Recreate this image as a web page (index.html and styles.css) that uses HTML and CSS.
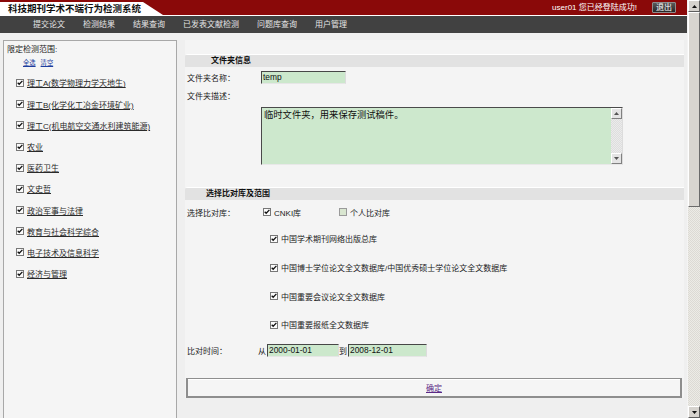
FILE: index.html
```html
<!DOCTYPE html>
<html lang="zh-CN">
<head>
<meta charset="utf-8">
<title>科技期刊学术不端行为检测系统</title>
<link rel="stylesheet" href="styles.css">
</head>
<body>
<div class="screen">
  <div class="page">
    <header class="topbar">
      <div class="brand">科技期刊学术不端行为检测系统</div>
      <div class="welcome">user01 您已经登陆成功!</div>
      <button class="logout" type="button">退出</button>
    </header>
    <nav class="nav">
      <a href="#">提交论文</a>
      <a href="#">检测结果</a>
      <a href="#">结果查询</a>
      <a href="#">已发表文献检测</a>
      <a href="#">问题库查询</a>
      <a href="#">用户管理</a>
    </nav>
    <div class="main">
      <aside class="side">
        <div class="side-title">限定检测范围:</div>
        <div class="side-links"><a href="#">全选</a><a href="#">清空</a></div>
        <ul class="cat-list">
          <li><svg class="cb" viewBox="0 0 8 8"><rect x="0.5" y="0.5" width="7" height="7" fill="#fbfbfb" stroke="#777"/><path d="M1.7 3.7 L3.2 5.3 L6.4 1.9" fill="none" stroke="#111" stroke-width="1.3"/></svg><a href="#">理工A(数学物理力学天地生)</a></li>
          <li><svg class="cb" viewBox="0 0 8 8"><rect x="0.5" y="0.5" width="7" height="7" fill="#fbfbfb" stroke="#777"/><path d="M1.7 3.7 L3.2 5.3 L6.4 1.9" fill="none" stroke="#111" stroke-width="1.3"/></svg><a href="#">理工B(化学化工冶金环境矿业)</a></li>
          <li><svg class="cb" viewBox="0 0 8 8"><rect x="0.5" y="0.5" width="7" height="7" fill="#fbfbfb" stroke="#777"/><path d="M1.7 3.7 L3.2 5.3 L6.4 1.9" fill="none" stroke="#111" stroke-width="1.3"/></svg><a href="#">理工C(机电航空交通水利建筑能源)</a></li>
          <li><svg class="cb" viewBox="0 0 8 8"><rect x="0.5" y="0.5" width="7" height="7" fill="#fbfbfb" stroke="#777"/><path d="M1.7 3.7 L3.2 5.3 L6.4 1.9" fill="none" stroke="#111" stroke-width="1.3"/></svg><a href="#">农业</a></li>
          <li><svg class="cb" viewBox="0 0 8 8"><rect x="0.5" y="0.5" width="7" height="7" fill="#fbfbfb" stroke="#777"/><path d="M1.7 3.7 L3.2 5.3 L6.4 1.9" fill="none" stroke="#111" stroke-width="1.3"/></svg><a href="#">医药卫生</a></li>
          <li><svg class="cb" viewBox="0 0 8 8"><rect x="0.5" y="0.5" width="7" height="7" fill="#fbfbfb" stroke="#777"/><path d="M1.7 3.7 L3.2 5.3 L6.4 1.9" fill="none" stroke="#111" stroke-width="1.3"/></svg><a href="#">文史哲</a></li>
          <li><svg class="cb" viewBox="0 0 8 8"><rect x="0.5" y="0.5" width="7" height="7" fill="#fbfbfb" stroke="#777"/><path d="M1.7 3.7 L3.2 5.3 L6.4 1.9" fill="none" stroke="#111" stroke-width="1.3"/></svg><a href="#">政治军事与法律</a></li>
          <li><svg class="cb" viewBox="0 0 8 8"><rect x="0.5" y="0.5" width="7" height="7" fill="#fbfbfb" stroke="#777"/><path d="M1.7 3.7 L3.2 5.3 L6.4 1.9" fill="none" stroke="#111" stroke-width="1.3"/></svg><a href="#">教育与社会科学综合</a></li>
          <li><svg class="cb" viewBox="0 0 8 8"><rect x="0.5" y="0.5" width="7" height="7" fill="#fbfbfb" stroke="#777"/><path d="M1.7 3.7 L3.2 5.3 L6.4 1.9" fill="none" stroke="#111" stroke-width="1.3"/></svg><a href="#">电子技术及信息科学</a></li>
          <li><svg class="cb" viewBox="0 0 8 8"><rect x="0.5" y="0.5" width="7" height="7" fill="#fbfbfb" stroke="#777"/><path d="M1.7 3.7 L3.2 5.3 L6.4 1.9" fill="none" stroke="#111" stroke-width="1.3"/></svg><a href="#">经济与管理</a></li>
        </ul>
      </aside>

      <section class="content">
        <div class="section-bar">文件夹信息</div>
        <div class="form-row row-name">
          <span class="label">文件夹名称：</span>
          <span class="field"><span class="input input-name">temp</span></span>
        </div>
        <div class="form-row row-desc">
          <span class="label">文件夹描述：</span>
          <span class="field"></span>
        </div>
        <div class="form-row row-text">
          <span class="label"></span>
          <div class="field">
            <div class="textarea">
              <div class="ta-text">临时文件夹，用来保存测试稿件。</div>
              <div class="ta-scroll">
                <div class="ta-btn"><svg viewBox="0 0 5 3" class="arrow"><path d="M0 3 L2.5 0 L5 3 Z" fill="#555"/></svg></div>
                <div class="ta-track"></div>
                <div class="ta-btn"><svg viewBox="0 0 5 3" class="arrow"><path d="M0 0 L5 0 L2.5 3 Z" fill="#555"/></svg></div>
              </div>
            </div>
          </div>
        </div>

        <div class="section-bar second">选择比对库及范围</div>
        <div class="form-row row-lib">
          <span class="label">选择比对库：</span>
          <span class="field options">
            <span class="opt opt-cnki"><svg class="cb" viewBox="0 0 8 8"><rect x="0.5" y="0.5" width="7" height="7" fill="#fbfbfb" stroke="#777"/><path d="M1.7 3.7 L3.2 5.3 L6.4 1.9" fill="none" stroke="#111" stroke-width="1.3"/></svg>CNKI库</span>
            <span class="opt"><svg class="cb" viewBox="0 0 8 8"><rect x="0.5" y="0.5" width="7" height="7" fill="#d9e6d0" stroke="#9a9a9a"/></svg>个人比对库</span>
          </span>
        </div>
        <div class="form-row row-sub">
          <span class="label"></span>
          <span class="field sub"><svg class="cb" viewBox="0 0 8 8"><rect x="0.5" y="0.5" width="7" height="7" fill="#fbfbfb" stroke="#777"/><path d="M1.7 3.7 L3.2 5.3 L6.4 1.9" fill="none" stroke="#111" stroke-width="1.3"/></svg>中国学术期刊网络出版总库</span>
        </div>
        <div class="form-row row-sub">
          <span class="label"></span>
          <span class="field sub"><svg class="cb" viewBox="0 0 8 8"><rect x="0.5" y="0.5" width="7" height="7" fill="#fbfbfb" stroke="#777"/><path d="M1.7 3.7 L3.2 5.3 L6.4 1.9" fill="none" stroke="#111" stroke-width="1.3"/></svg>中国博士学位论文全文数据库/中国优秀硕士学位论文全文数据库</span>
        </div>
        <div class="form-row row-sub">
          <span class="label"></span>
          <span class="field sub"><svg class="cb" viewBox="0 0 8 8"><rect x="0.5" y="0.5" width="7" height="7" fill="#fbfbfb" stroke="#777"/><path d="M1.7 3.7 L3.2 5.3 L6.4 1.9" fill="none" stroke="#111" stroke-width="1.3"/></svg>中国重要会议论文全文数据库</span>
        </div>
        <div class="form-row row-sub">
          <span class="label"></span>
          <span class="field sub"><svg class="cb" viewBox="0 0 8 8"><rect x="0.5" y="0.5" width="7" height="7" fill="#fbfbfb" stroke="#777"/><path d="M1.7 3.7 L3.2 5.3 L6.4 1.9" fill="none" stroke="#111" stroke-width="1.3"/></svg>中国重要报纸全文数据库</span>
        </div>
        <div class="form-row row-time">
          <span class="label">比对时间：</span>
          <span class="field time">从<span class="input input-date">2000-01-01</span>到<span class="input input-date2">2008-12-01</span></span>
        </div>
        <div class="submit-box"><a href="#">确定</a></div>
      </section>
    </div>
  </div>
  <div class="vscroll">
    <div class="sb-btn"><svg viewBox="0 0 5 3" class="arrow"><path d="M0 3 L2.5 0 L5 3 Z" fill="#111"/></svg></div>
    <div class="sb-thumb"></div>
    <div class="sb-track"></div>
    <div class="sb-btn"><svg viewBox="0 0 5 3" class="arrow"><path d="M0 0 L5 0 L2.5 3 Z" fill="#111"/></svg></div>
  </div>
</div>
</body>
</html>
```

FILE: styles.css
```css
* { box-sizing: border-box; }
html, body { margin: 0; padding: 0; }
body {
  width: 700px;
  height: 418px;
  overflow: hidden;
  background: #efefef;
  color: #222;
  font-family: "Liberation Sans", "Noto Sans CJK SC", sans-serif;
  font-size: 8px;
}
a { color: inherit; }

.screen { display: flex; height: 418px; }
.page { flex: 1; min-width: 0; display: flex; flex-direction: column; background: #efefef; }

/* header */
.topbar {
  height: 16px;
  background: #8a0909;
  border-bottom: 1px solid #fff;
  display: flex;
  align-items: center;
}
.brand {
  align-self: flex-end;
  width: 163px;
  height: 13px;
  background: #fff;
  clip-path: polygon(0 0, 143px 0, 100% 100%, 0 100%);
  padding-left: 8px;
  font-weight: bold;
  font-size: 9.5px;
  line-height: 13px;
  color: #111;
  white-space: nowrap;
}
.welcome {
  margin-left: auto;
  color: #fff;
  font-size: 8px;
  line-height: 10px;
  white-space: nowrap;
}
.logout {
  margin: 0 11px 0 15px;
  width: 24px;
  height: 11px;
  padding: 0;
  border: 1px solid #8d8d8d;
  border-radius: 1px;
  background: linear-gradient(#5a5a5a, #262626);
  color: #fff;
  font: 8px/9px "Liberation Sans", "Noto Sans CJK SC", sans-serif;
}

.nav {
  height: 17px;
  background: #414141;
  display: flex;
  align-items: center;
  gap: 18px;
  padding-left: 33px;
}
.nav a {
  color: #e4e4e4;
  text-decoration: none;
  font-size: 8px;
  line-height: 10px;
  white-space: nowrap;
}

/* body */
.main {
  flex: 1;
  min-height: 0;
  display: flex;
  align-items: flex-start;
  gap: 8px;
  padding: 7px 3px 0 3px;
  overflow: hidden;
}

.side {
  width: 174px;
  height: 400px;
  flex: none;
  border: 1px solid #a8a8a8;
  background: #f5f5f5;
  padding-top: 2px;
}
.side-title {
  padding-left: 3px;
  line-height: 14px;
  color: #222;
}
.side-links {
  display: flex;
  gap: 5px;
  padding-left: 19px;
  line-height: 12px;
  font-size: 6.3px;
}
.side-links a { color: #1d3d9e; }
.cat-list {
  list-style: none;
  margin: 3.4px 0 0;
  padding: 0 0 0 12px;
}
.cat-list li {
  height: 21.2px;
  display: flex;
  align-items: center;
  gap: 3px;
}
.cat-list a { color: #2a2a2a; white-space: nowrap; }

.cb { width: 8px; height: 8px; flex: none; display: block; }

/* content */
.content {
  flex: 1;
  min-width: 0;
  background: #f4f4f4;
  padding-top: 14px;
}
.section-bar {
  height: 13px;
  background: linear-gradient(#ffffff 0 1px, #e2e2e2 1px);
  border-top-left-radius: 3px;
  padding-left: 26px;
  font-weight: bold;
  line-height: 13px;
  color: #111;
}
.section-bar.second { margin-top: 22px; padding-left: 21px; }

.form-row {
  display: grid;
  grid-template-columns: 74px 1fr;
  align-items: center;
  padding-left: 2px;
}
.label { white-space: nowrap; color: #222; }
.field { display: flex; align-items: center; white-space: nowrap; }

.row-name { height: 18px; margin-top: 1px; }
.row-desc { height: 18px; }
.row-text { padding-top: 3px; align-items: start; }
.row-lib { height: 24.67px; }
.row-sub { height: 28.67px; }
.row-time { height: 23.33px; }

.input {
  display: block;
  height: 13px;
  background: #cce8cc;
  border-top: 1px solid #474747;
  border-left: 1px solid #474747;
  border-right: 1px solid #dcdcdc;
  border-bottom: 1px solid #e6e6e6;
  padding-left: 1px;
  font-size: 8.4px;
  line-height: 11px;
  color: #111;
}
.input-name { width: 85px; }
.input-date { width: 72px; margin: 0 0 0 1px; }
.input-date2 { width: 79px; margin-left: 1px; }

.textarea {
  width: 362px;
  height: 58px;
  display: flex;
  background: #cde8cd;
  border-top: 1px solid #4a4a4a;
  border-left: 1px solid #4a4a4a;
  border-right: 1px solid #dcdcdc;
  border-bottom: 1px solid #e8e8e8;
}
.ta-text {
  flex: 1;
  padding: 0 2px;
  font-size: 9.3px;
  line-height: 12px;
  color: #111;
  font-family: "Noto Sans CJK SC", sans-serif;
}
.ta-scroll {
  width: 11px;
  display: flex;
  flex-direction: column;
  background: repeating-conic-gradient(#ebebeb 0 25%, #dedede 0 50%) 0 0 / 2px 2px;
}
.ta-btn {
  height: 11px;
  background: #e4e4e4;
  border-top: 1px solid #fff;
  border-left: 1px solid #fff;
  border-right: 1px solid #808080;
  border-bottom: 1px solid #808080;
  display: flex;
  align-items: center;
  justify-content: center;
}
.ta-track { flex: 1; }
.arrow { width: 5px; height: 3px; display: block; }

.options { padding-left: 2px; }
.opt { display: flex; align-items: center; gap: 3px; }
.opt-cnki { width: 76px; }
.sub { padding-left: 9px; gap: 3px; }

.time { margin-left: -3px; }

.submit-box {
  margin: 15.33px 2px 0 1px;
  height: 20px;
  border: 2px solid #8e8e8e;
  border-top-width: 1px;
  box-shadow: inset 0 1px #fff;
  background: #f5f5f5;
  display: flex;
  align-items: center;
  justify-content: center;
}
.submit-box a { color: #5b2a86; }

/* page scrollbar */
.vscroll {
  width: 13px;
  flex: none;
  display: flex;
  flex-direction: column;
  background: repeating-conic-gradient(#ecebe6 0 25%, #dcdad4 0 50%) 0 0 / 2px 2px;
  border-left: 1px solid #f4f4f4;
}
.sb-btn {
  height: 12px;
  flex: none;
  background: #d6d3ce;
  border-top: 1px solid #fff;
  border-left: 1px solid #fff;
  border-right: 1px solid #5f5f5f;
  border-bottom: 1px solid #5f5f5f;
  display: flex;
  align-items: center;
  justify-content: center;
}
.sb-thumb {
  height: 195px;
  flex: none;
  background: #d8d5d0;
  border-top: 1px solid #fff;
  border-left: 1px solid #fff;
  border-right: 1px solid #6a6a6a;
  border-bottom: 1px solid #6a6a6a;
}
.sb-track { flex: 1; }
```
